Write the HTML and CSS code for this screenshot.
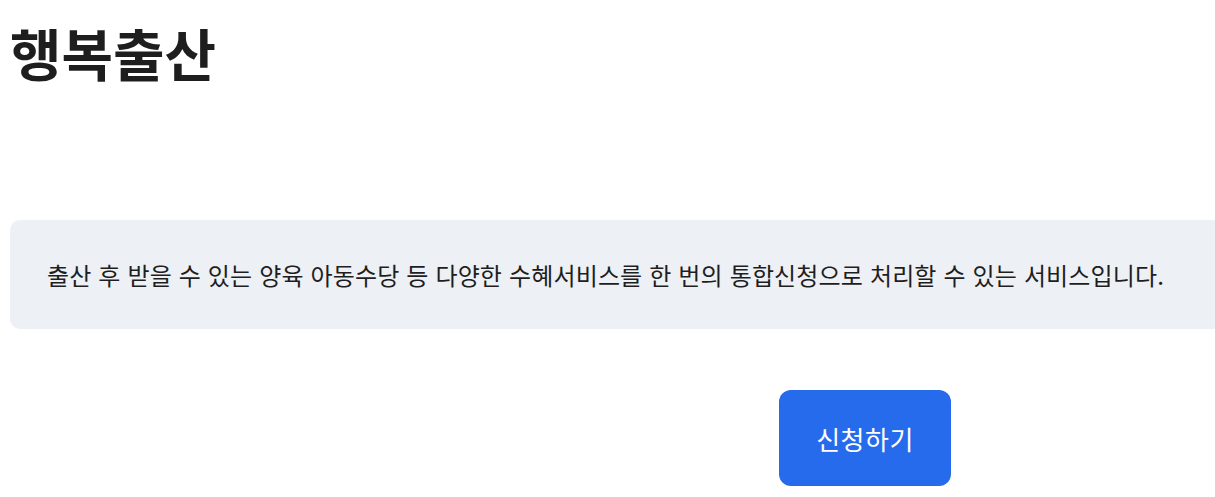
FILE: index.html
```html
<!DOCTYPE html>
<html lang="ko">
<head>
<meta charset="utf-8">
<title>행복출산</title>
<link rel="stylesheet" href="styles.css">
</head>
<body>
<main class="page">
  <h1 class="title">행복출산</h1>
  <section class="info">
    <p class="info-text">출산 후 받을 수 있는 양육 아동수당 등 다양한 수혜서비스를 한 번의 통합신청으로 처리할 수 있는 서비스입니다.</p>
  </section>
  <div class="actions">
    <button class="apply" type="button">신청하기</button>
  </div>
</main>
</body>
</html>
```
FILE: styles.css
```css
html, body {
  margin: 0;
  padding: 0;
  overflow: hidden;
  background: #ffffff;
}
body {
  font-family: "Noto Sans CJK KR", "Noto Sans", sans-serif;
  color: #1e1e1e;
}
.page {
  width: 1710px;
  padding: 0 0 0 10px;
}
.title {
  margin: 0;
  padding-top: 12px;
  font-size: 56px;
  font-weight: 700;
  line-height: 80px;
  color: #1e1e1e;
}
.info {
  margin-top: 128px;
  background: #edf0f4;
  border-radius: 10px;
  height: 109px;
  display: flex;
  align-items: center;
  padding: 0 37px;
}
.info-text {
  margin: 0;
  font-size: 24px;
  line-height: 32px;
  letter-spacing: 0.15px;
  color: #1e1e1e;
}
.actions {
  display: flex;
  justify-content: center;
  margin-top: 61px;
}
.apply {
  width: 172px;
  height: 96px;
  border: none;
  border-radius: 12px;
  background: #256beb;
  color: #ffffff;
  font-family: "Noto Sans CJK KR", "Noto Sans", sans-serif;
  font-size: 26px;
  letter-spacing: 0.5px;
}
```
